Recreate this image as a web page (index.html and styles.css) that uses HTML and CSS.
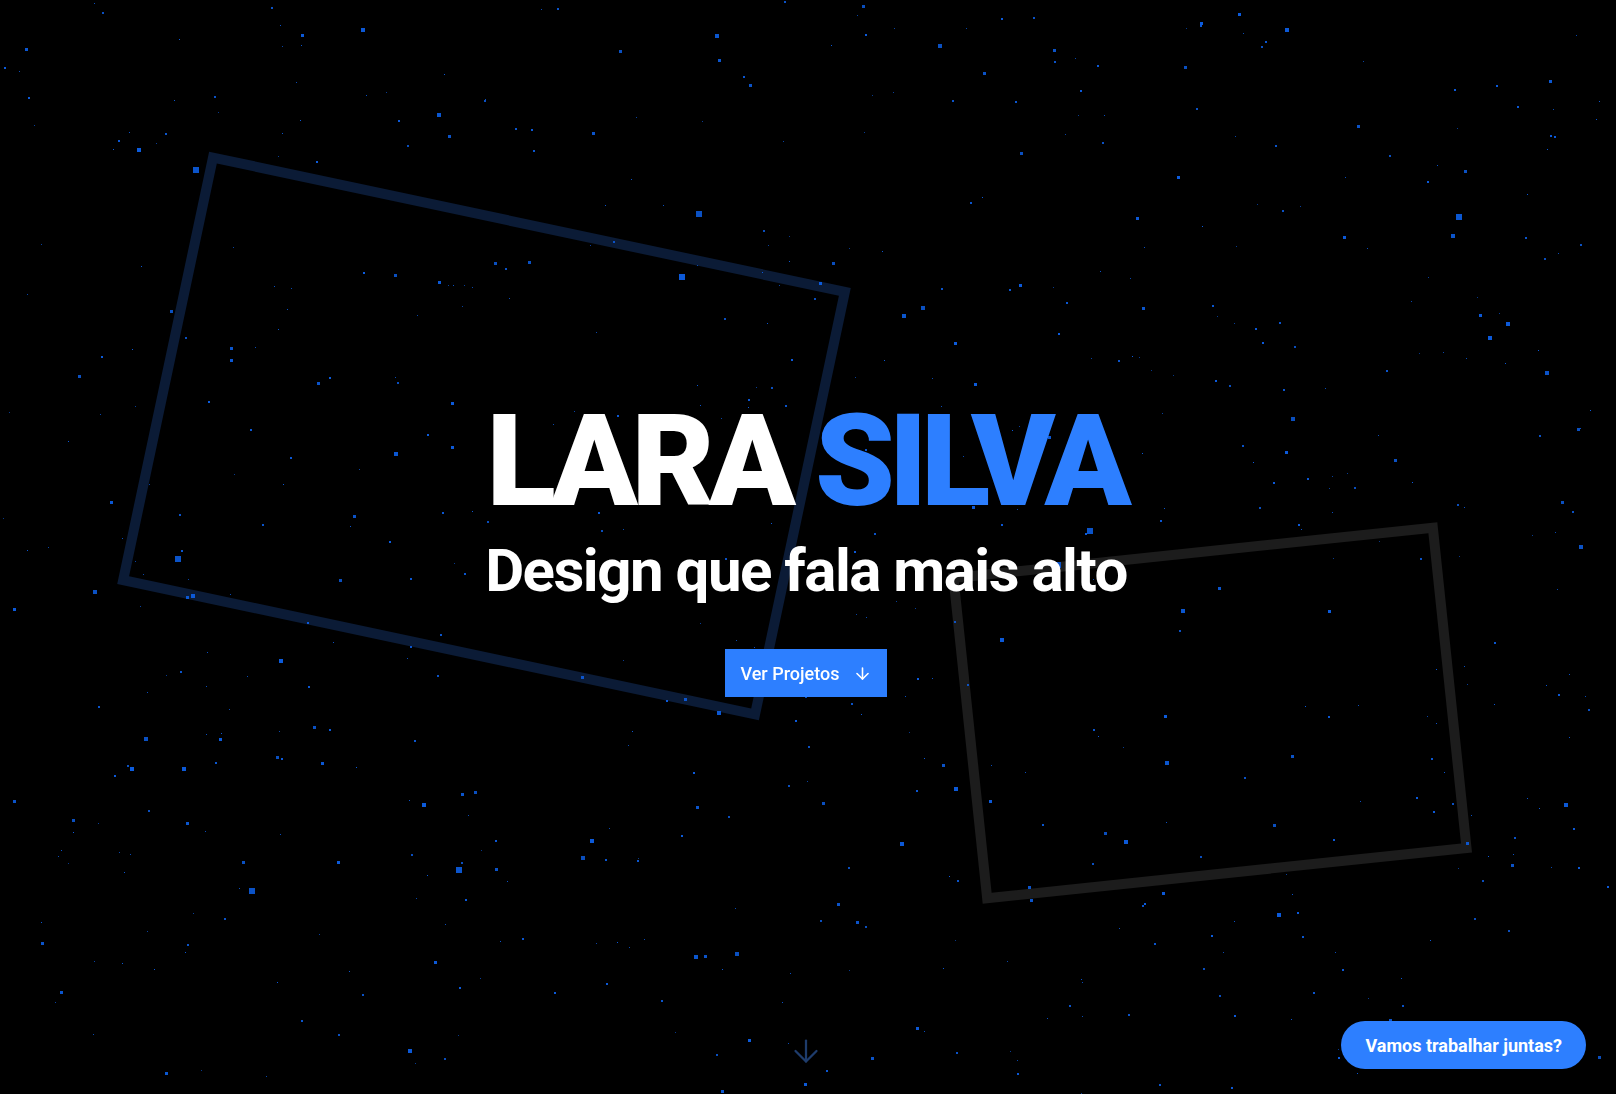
FILE: index.html
```html
<!DOCTYPE html>
<html lang="pt-BR">
<head>
<meta charset="utf-8">
<title>Lara Silva</title>
<link rel="stylesheet" href="styles.css">
</head>
<body>
<main class="hero">
  <div class="shape shape-blue"></div>
  <div class="shape shape-gray"></div>
  <canvas id="stars" class="stars" width="1616" height="1094"></canvas>
  <div class="hero-content">
    <h1 class="title">LARA <span class="accent">SILVA</span></h1>
    <p class="subtitle">Design que fala mais alto</p>
    <a class="btn-primary" href="#projetos">
      <span>Ver Projetos</span>
      <svg class="btn-icon" viewBox="0 0 24 24" width="19" height="19" fill="none" stroke="currentColor" stroke-width="2" stroke-linecap="round" stroke-linejoin="round"><path d="M12 5v14"/><path d="M19 12l-7 7-7-7"/></svg>
    </a>
  </div>
  <div class="scroll-hint">
    <svg viewBox="0 0 24 24" width="36" height="36" fill="none" stroke="currentColor" stroke-width="1.5" stroke-linecap="round" stroke-linejoin="round"><path d="M12 5v14"/><path d="M19 12l-7 7-7-7"/></svg>
  </div>
</main>
<a class="cta" href="#contato">Vamos trabalhar juntas?</a>
<script src="script.js"></script>
</body>
</html>
```

FILE: styles.css
```css
* { box-sizing: border-box; }
html, body { margin: 0; padding: 0; }
body {
  background: #000;
  color: #fff;
  font-family: Roboto, "Liberation Sans", sans-serif;
  overflow: hidden;
}
.hero {
  position: relative;
  height: 100vh;
  padding-right: 4px;
  display: flex;
  align-items: center;
  justify-content: center;
  overflow: hidden;
}
.shape {
  position: absolute;
  border: 10px solid #0b1b36;
}
.shape-blue {
  left: 156px;
  top: 215px;
  width: 656px;
  height: 442px;
  transform: rotate(12deg);
}
.shape-gray {
  left: 964px;
  top: 547px;
  width: 492px;
  height: 332px;
  border-color: #1c1c1c;
  transform: rotate(-6deg);
}
.stars {
  position: absolute;
  left: 0;
  top: 0;
}
.hero-content {
  position: relative;
  display: flex;
  flex-direction: column;
  align-items: center;
}
.title {
  margin: 0;
  font-size: 128px;
  line-height: 1;
  font-weight: 900;
  letter-spacing: -0.05em;
  color: #fff;
}
.accent { color: #2d7fff; }
.subtitle {
  margin: 7px 0 0;
  font-size: 60px;
  line-height: 77px;
  font-weight: 700;
  letter-spacing: -0.025em;
}
.btn-primary {
  margin-top: 40px;
  height: 48px;
  display: flex;
  align-items: center;
  gap: 14px;
  padding: 0 15px 0 16px;
  background: #2d7fff;
  color: #fff;
  text-decoration: none;
  font-size: 18px;
  font-weight: 500;
}
.btn-icon { display: block; }
.scroll-hint {
  position: absolute;
  left: 0;
  right: 0;
  bottom: 25px;
  padding-right: 4px;
  display: flex;
  justify-content: center;
  color: #1e3c6c;
}
.scroll-hint svg { display: block; }
.cta {
  position: fixed;
  right: 30px;
  bottom: 25px;
  height: 48px;
  padding: 0 24px;
  display: flex;
  align-items: center;
  border-radius: 24px;
  background: #2d7fff;
  color: #fff;
  text-decoration: none;
  font-size: 18px;
  font-weight: 700;
}
```

FILE: script.js
```js
(function () {
  var c = document.getElementById('stars');
  var ctx = c.getContext('2d');
  var seed = 12345;
  function rnd() {
    seed = (seed * 1103515245 + 12345) % 2147483648;
    return seed / 2147483648;
  }
  for (var i = 0; i < 650; i++) {
    var x = Math.floor(rnd() * 1616);
    var y = Math.floor(rnd() * 1094);
    var r = rnd();
    var s;
    if (r < 0.5) s = 1;
    else if (r < 0.8) s = 2;
    else if (r < 0.94) s = 3;
    else if (r < 0.985) s = 4;
    else s = 6;
    var a = s === 1 ? 0.6 + rnd() * 0.4 : 0.85 + rnd() * 0.15;
    ctx.fillStyle = 'rgba(12, 92, 222,' + a.toFixed(2) + ')';
    ctx.fillRect(x, y, s, s);
  }
})();
```
